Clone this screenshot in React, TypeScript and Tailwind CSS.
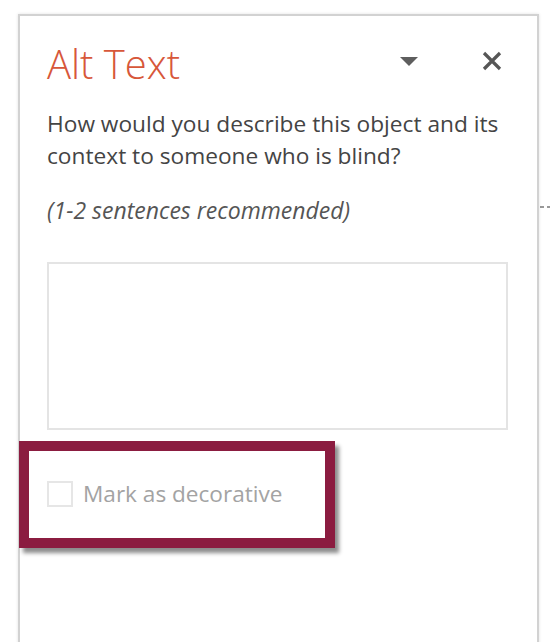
export default function App() {
  return (
    <div className="min-h-screen bg-white flex" style={{ fontFamily: '"Open Sans", "Noto Sans", sans-serif' }}>
      <div className="relative ml-[18px] mt-[14px] w-[521px] h-[640px] border-2 border-b-0 border-[#d2d2d2] bg-white shadow-[0_0_3px_rgba(0,0,0,0.12)] pl-[27px] pr-[35px]">
        {/* header */}
        <div className="flex items-center pt-[24px] h-[72px]">
          <h1 className="text-[40px] leading-[48px] font-light text-[#d7573a]">Alt Text</h1>
          <div className="ml-auto flex items-center">
            <svg width="18" height="9" viewBox="0 0 18 9" className="mr-[64px] mt-[-6px]">
              <path d="M0 0 L18 0 L9 9 Z" fill="#5e5e5e" />
            </svg>
            <svg width="20" height="20" viewBox="0 0 20 20" className="mt-[-6px]">
              <path d="M2 2 L18 18 M18 2 L2 18" stroke="#565656" strokeWidth="3.2" />
            </svg>
          </div>
        </div>

        <p className="mt-[20px] text-[22.7px] leading-[32px] text-[#444]">
          How would you describe this object and its context to someone who is blind?
        </p>
        <p className="mt-[22px] text-[23px] leading-[33px] italic text-[#555]">(1-2 sentences recommended)</p>

        <div className="mt-[35px] w-[461px] h-[168px] border-2 border-[#e4e4e4] bg-white" />

        <div className="mt-[47px] flex items-center">
          <div className="w-[26px] h-[26px] border-2 border-[#e6e6e6] bg-white" />
          <span className="ml-[10px] text-[22.6px] text-[#a3a3a3]">Mark as decorative</span>
        </div>

        {/* highlight annotation */}
        <div className="absolute left-[-1px] top-[425px] w-[316px] h-[107px] border-[10px] border-[#8b1c40] shadow-[4px_5px_4px_rgba(0,0,0,0.45)]" />
      </div>
      <div className="mt-[206px] ml-[1px] flex gap-[3px]">
        <div className="w-[4px] h-[2px] bg-[#999]" />
        <div className="w-[4px] h-[2px] bg-[#999]" />
      </div>
    </div>
  );
}
